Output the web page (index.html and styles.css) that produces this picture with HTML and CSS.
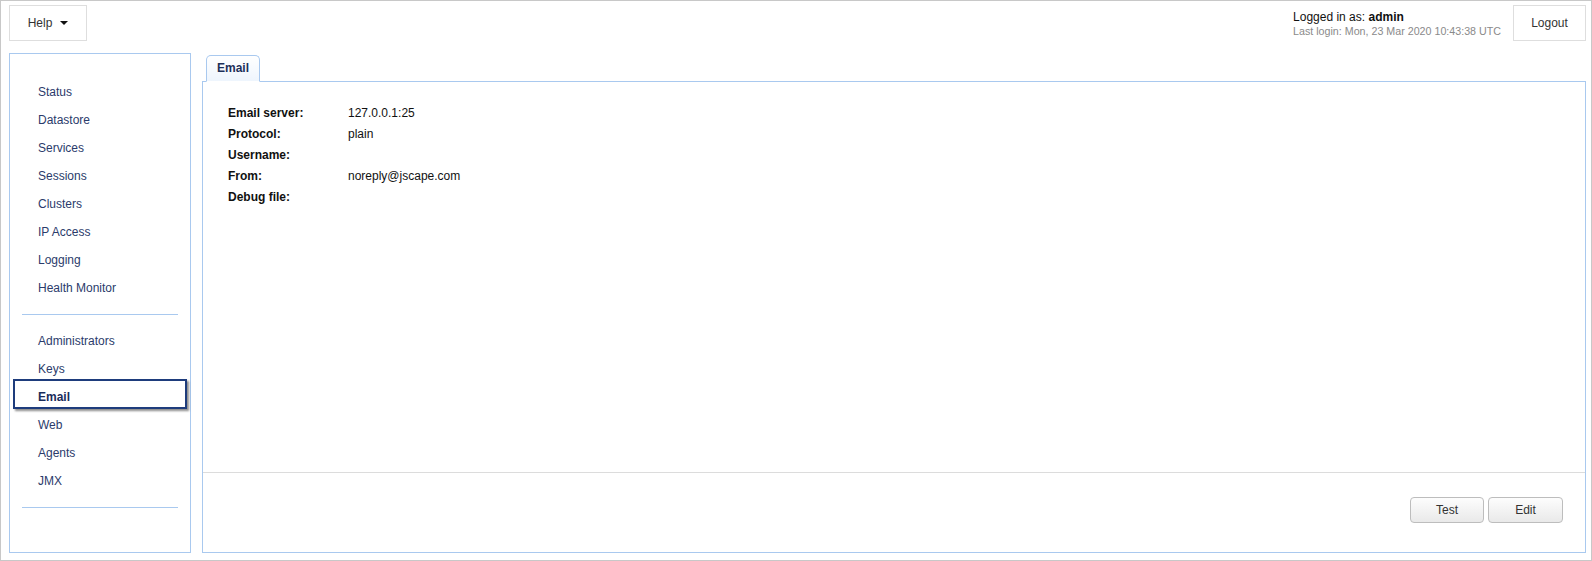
FILE: index.html
```html
<!DOCTYPE html>
<html>
<head>
<meta charset="utf-8">
<link rel="stylesheet" href="styles.css">
</head>
<body>
<div class="frame">
  <div class="header">
    <button class="hbtn help">Help <span class="caret"></span></button>
    <div class="user">
      <div class="login-info">
        <div class="logged">Logged in as: <b>admin</b></div>
        <div class="last">Last login: Mon, 23 Mar 2020 10:43:38 UTC</div>
      </div>
      <button class="hbtn logout">Logout</button>
    </div>
  </div>
  <div class="main">
    <div class="sidebar">
      <div class="nav-item">Status</div>
      <div class="nav-item">Datastore</div>
      <div class="nav-item">Services</div>
      <div class="nav-item">Sessions</div>
      <div class="nav-item">Clusters</div>
      <div class="nav-item">IP Access</div>
      <div class="nav-item">Logging</div>
      <div class="nav-item">Health Monitor</div>
      <div class="sep"></div>
      <div class="nav-item">Administrators</div>
      <div class="nav-item">Keys</div>
      <div class="nav-item active">Email</div>
      <div class="nav-item">Web</div>
      <div class="nav-item">Agents</div>
      <div class="nav-item">JMX</div>
      <div class="sep"></div>
    </div>
    <div class="content">
      <div class="tabs"><div class="tab">Email</div></div>
      <div class="panel">
        <div class="panel-body">
          <div class="grid">
            <div class="lbl">Email server:</div><div class="val">127.0.0.1:25</div>
            <div class="lbl">Protocol:</div><div class="val">plain</div>
            <div class="lbl">Username:</div><div class="val"></div>
            <div class="lbl">From:</div><div class="val">noreply@jscape.com</div>
            <div class="lbl">Debug file:</div><div class="val"></div>
          </div>
        </div>
        <div class="panel-footer">
          <button class="btn">Test</button>
          <button class="btn">Edit</button>
        </div>
      </div>
    </div>
  </div>
</div>
</body>
</html>
```
FILE: styles.css
```css
* { box-sizing: border-box; }
html, body { margin: 0; padding: 0; background: #fff; }
body { font-family: "Liberation Sans", Arial, sans-serif; font-size: 12px; color: #222; }

.frame {
  width: 1592px;
  height: 561px;
  border: 1px solid #c8c8c8;
  padding: 4px 5px 7px 8px;
  display: flex;
  flex-direction: column;
}

.header {
  display: flex;
  justify-content: space-between;
  align-items: flex-start;
  height: 36px;
}
.hbtn {
  height: 36px;
  background: #fff;
  border: 1px solid #dedede;
  font-family: "Liberation Sans", Arial, sans-serif;
  font-size: 12px;
  color: #333;
  padding: 0;
  display: flex;
  align-items: center;
  justify-content: center;
}
.help { width: 78px; gap: 6px; }
.caret {
  display: inline-block;
  width: 0; height: 0;
  border-left: 4px solid transparent;
  border-right: 4px solid transparent;
  border-top: 4px solid #111;
  margin-left: 2px;
}
.user { display: flex; align-items: flex-start; }
.login-info { padding-top: 5px; margin-right: 12px; }
.logged { font-size: 12px; color: #111; line-height: 14px; }
.logged b { color: #111; }
.last { font-size: 10.7px; color: #8a8a8a; line-height: 12px; margin-top: 1px; }
.logout { width: 73px; }

.main {
  margin-top: 12px;
  flex: 1;
  display: flex;
  gap: 11px;
  min-height: 0;
}

.sidebar {
  width: 182px;
  border: 1px solid #a9c9ef;
  padding-top: 24px;
}
.nav-item {
  position: relative;
  height: 28px;
  line-height: 28px;
  padding-left: 28px;
  color: #2b3b6b;
  font-size: 12px;
}
.nav-item.active { font-weight: bold; color: #1a2c5a; }
.nav-item.active::before {
  content: "";
  position: absolute;
  left: 3px; right: 3px;
  top: -4px; bottom: 2px;
  border: 2px solid #1e3c7c;
  box-shadow: 2px 2px 2px rgba(0,0,0,0.45);
}
.sep {
  height: 1px;
  background: #a9c9ef;
  margin: 12px 12px;
}

.content {
  flex: 1;
  display: flex;
  flex-direction: column;
  min-width: 0;
}
.tabs {
  display: flex;
  padding-left: 4px;
  margin-top: 2px;
  position: relative;
  z-index: 1;
  margin-bottom: -1px;
}
.tab {
  height: 27px;
  line-height: 25px;
  padding: 0 10px;
  border: 1px solid #a9c9ef;
  border-bottom: 1px solid #fff;
  border-radius: 5px 5px 0 0;
  background: linear-gradient(#ffffff, #eef5fd);
  font-weight: bold;
  color: #1d3059;
  font-size: 12px;
}
.panel {
  flex: 1;
  border: 1px solid #a9c9ef;
  display: flex;
  flex-direction: column;
}
.panel-body {
  flex: 1;
  padding: 21px 25px;
}
.grid {
  display: grid;
  grid-template-columns: 120px 1fr;
  grid-auto-rows: 20.8px;
  align-items: center;
}
.lbl { font-weight: bold; color: #111; }
.val { color: #111; }

.panel-footer {
  height: 80px;
  border-top: 1px solid #dcdcdc;
  display: flex;
  justify-content: flex-end;
  align-items: flex-start;
  padding: 24px 22px 0 0;
  gap: 4px;
}
.btn {
  height: 26px;
  width: 74px;
  border: 1px solid #bdbdbd;
  border-radius: 4px;
  background: linear-gradient(#fdfdfd, #e9e9e9);
  font-family: "Liberation Sans", Arial, sans-serif;
  font-size: 12px;
  color: #333;
  padding: 0;
}
.btn + .btn { width: 75px; }
```
